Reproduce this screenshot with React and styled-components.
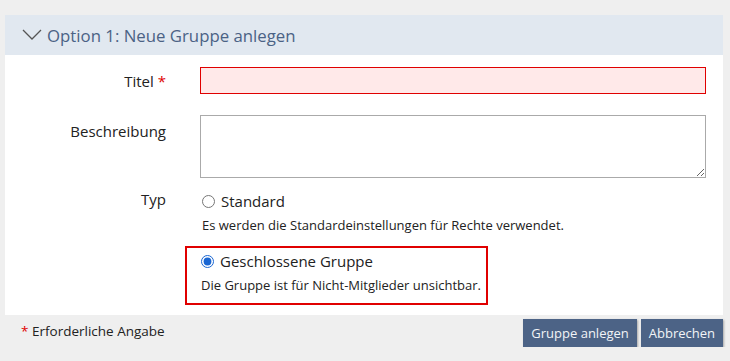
import React from "react";
import styled, { createGlobalStyle } from "styled-components";

const Global = createGlobalStyle`
  html, body {
    margin: 0;
    padding: 0;
    background: #efefef;
    font-family: "Open Sans", "Liberation Sans", sans-serif;
    color: #222;
  }
  * { box-sizing: border-box; }
`;

const Page = styled.div`
  width: 718px;
  margin-left: 5px;
  padding-top: 15px;
`;

const Panel = styled.div`
  background: #fff;
`;

const Header = styled.div`
  height: 40px;
  background: #e1e8f0;
  display: flex;
  align-items: center;
  padding-left: 17px;
  gap: 5px;
  color: #4b6285;
  font-size: 16.8px;
  svg {
    display: block;
  }
`;

const Form = styled.div`
  padding: 12px 17px 10px 0;
  display: flex;
  flex-direction: column;
`;

const Row = styled.div`
  display: grid;
  grid-template-columns: 161px 1fr;
  column-gap: 34px;
  align-items: ${(p) => (p.$center ? "center" : "start")};
  margin-top: ${(p) => p.$top || 0}px;
`;

const Label = styled.label`
  text-align: right;
  font-size: 15px;
  line-height: 22px;
  color: #222;
  padding-top: ${(p) => p.$pad || 0}px;
`;

const Star = styled.span`
  color: #e00000;
`;

const TextInput = styled.input`
  display: block;
  width: 100%;
  height: 27px;
  border: 1px solid #e00000;
  background: #ffe9e9;
  font: inherit;
  outline: none;
`;

const TextArea = styled.textarea`
  display: block;
  width: 100%;
  height: 63px;
  border: 1px solid #aaa;
  background: #fff;
  font: inherit;
  resize: both;
  outline: none;
`;

const Options = styled.div`
  display: flex;
  flex-direction: column;
  align-items: flex-start;
`;

const Option = styled.div`
  border: 2px solid ${(p) => (p.$marked ? "#e00000" : "transparent")};
  margin-left: ${(p) => (p.$marked ? "-15px" : "0")};
  padding: ${(p) => (p.$marked ? "2px 5px 10px 14px" : "0")};
  margin-top: ${(p) => (p.$marked ? "11px" : "0")};
`;

const RadioLine = styled.label`
  display: flex;
  align-items: center;
  gap: 6px;
  font-size: 15px;
  line-height: 22px;
  color: #222;
  input {
    margin: 0;
    width: 13px;
    height: 13px;
    accent-color: #1a66d2;
  }
`;

const Hint = styled.div`
  font-size: 13px;
  line-height: 16px;
  margin-top: 5px;
  color: #222;
`;

const Footer = styled.div`
  display: flex;
  justify-content: space-between;
  align-items: flex-start;
  padding-top: 4px;
`;

const Note = styled.div`
  font-size: 13.5px;
  line-height: 22px;
  padding-left: 16px;
  margin-top: 1px;
`;

const Buttons = styled.div`
  display: flex;
  gap: 4px;
`;

const Button = styled.button`
  height: 28px;
  padding: 0 8px;
  background: #4c6386;
  color: #f2f4f7;
  border: none;
  font-family: "Open Sans", "Liberation Sans", sans-serif;
  font-size: 13px;
  box-shadow: 1px 1px 2px rgba(0, 0, 0, 0.3);
  cursor: pointer;
`;

export default function App() {
  return (
    <Page>
      <Global />
      <Panel>
        <Header>
          <svg width="20" height="12" viewBox="0 0 20 12">
            <polyline
              points="1,1 10,10 19,1"
              fill="none"
              stroke="#555"
              strokeWidth="1.3"
            />
          </svg>
          Option 1: Neue Gruppe anlegen
        </Header>
        <Form>
          <Row $center>
            <Label>
              Titel <Star>*</Star>
            </Label>
            <TextInput type="text" />
          </Row>
          <Row $top={21}>
            <Label $pad={5}>Beschreibung</Label>
            <TextArea />
          </Row>
          <Row $top={10}>
            <Label>Typ</Label>
            <Options>
              <Option>
                <RadioLine>
                  <input type="radio" name="typ" />
                  Standard
                </RadioLine>
                <Hint>Es werden die Standardeinstellungen für Rechte verwendet.</Hint>
              </Option>
              <Option $marked>
                <RadioLine>
                  <input type="radio" name="typ" defaultChecked />
                  Geschlossene Gruppe
                </RadioLine>
                <Hint>Die Gruppe ist für Nicht-Mitglieder unsichtbar.</Hint>
              </Option>
            </Options>
          </Row>
        </Form>
      </Panel>
      <Footer>
        <Note>
          <Star>*</Star> Erforderliche Angabe
        </Note>
        <Buttons>
          <Button>Gruppe anlegen</Button>
          <Button>Abbrechen</Button>
        </Buttons>
      </Footer>
    </Page>
  );
}
